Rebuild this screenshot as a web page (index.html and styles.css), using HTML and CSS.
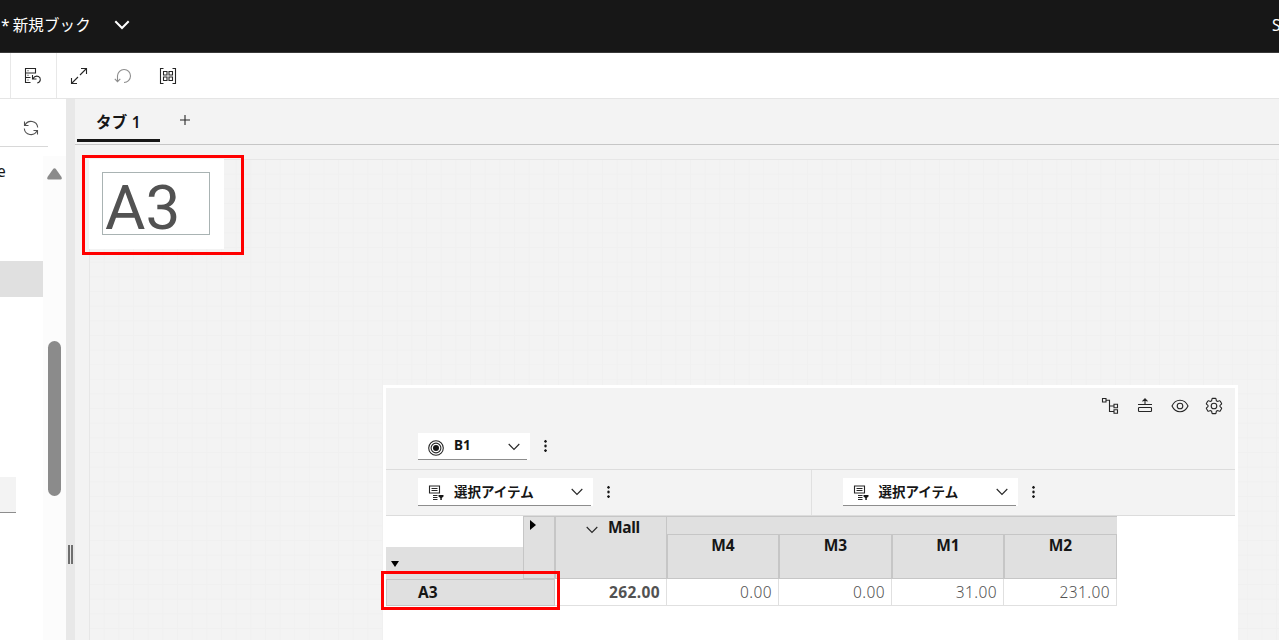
FILE: index.html
```
<!DOCTYPE html>
<html lang="ja">
<head>
  <meta charset="UTF-8">
  <title>新規ブック</title>
  <link rel="stylesheet" href="styles.css">
</head>
<body>

  <header class="header">
    <span class="book-name">* 新規ブック</span>
    <svg class="chevron" width="16" height="10" viewBox="0 0 16 10"><path d="M1.300 1.300 8 8l6.700-6.700"/></svg>
    <span class="user">S</span>
  </header>

  <div class="toolbar">
    <div class="tool-group first">
      <svg width="18" height="18" viewBox="0 0 18 18"><path d="M6.500 15.500H1.500V1.500h10V6H1.500M1.500 10.500h5M3.500 3.700h1M3.500 8.300h1M3.500 13h1M8.500 8v4h4M8.800 11.700c1.700-2.500 4-3 5.700-2.200 2.600 1.200 2.600 5.500-1.200 6.500"/></svg>
    </div>
    <div class="tool-group">
      <svg width="18" height="18" viewBox="0 0 18 18"><path d="M11 1.500h5.500V7M16.500 1.500l-6.500 6.500M7 16.500H1.500V11M1.500 16.500l6.500-6.500"/></svg>
      <svg class="disabled" width="18" height="18" viewBox="0 0 18 18"><path d="M3.500 14.500V8.800a6.500 6.500 0 1 1 6.500 6.700M.8 11.900l2.700 2.800 2.800-2.800"/></svg>
      <svg class="tiles" width="18" height="18" viewBox="0 0 18 18"><path d="M4.500 1.500h-3v15h3M13.500 1.500h3v15h-3M4.500 4.500h3.500v3.500H4.500zM10 4.500h3.500v3.500H10zM4.500 10h3.500v3.500H4.500zM10 10h3.500v3.500H10z"/></svg>
    </div>
  </div>

  <div class="workspace">
    <aside class="side">
      <div class="side-head">
        <svg width="16" height="16" viewBox="0 0 16 16"><path d="M1.500 1.500V5.500H5.500M2 5.200A6.700 6.700 0 0 1 14.700 7.500M14.500 14.500v-4h-4M14 10.800A6.700 6.700 0 0 1 1.300 8.500"/></svg>
      </div>
      <div class="side-body">
        <div class="tree">
          <div class="tree-text">e</div>
          <div class="tree-selected"></div>
          <div class="tree-input"></div>
        </div>
        <div class="scrollbar">
          <svg width="15" height="12" viewBox="0 0 15 12"><path d="M6.300.7Q7.500-.3 8.700.7L14.500 9Q15.300 11.500 13.500 11.500H1.500Q-.3 11.500.5 9z"/></svg>
          <div class="thumb"></div>
        </div>
      </div>
    </aside>
    <div class="splitter"><span class="grip"></span></div>

    <main class="main">
      <nav class="tabs">
        <span class="tab">タブ 1</span>
        <svg width="10" height="10" viewBox="0 0 10 10"><path d="M5 0v10M0 5h10"/></svg>
      </nav>

      <div class="canvas">
        <section class="widget text-widget">
          <div class="text-value">A3</div>
        </section>

        <section class="widget view-widget">
          <div class="view-tools">
            <svg width="18" height="18" viewBox="0 0 18 18"><path d="M1.500 1.500h3.500v3.500H1.500zM5 3.300h3.500v11.200H13M8.500 9H13M13 7.200h3.500v3.500H13zM13 12.700h3.500v3.500H13z"/></svg>
            <svg width="16" height="16" viewBox="0 0 16 16"><path d="M1 7.500h14M8 7V2M5.500 4.300 8 1.800l2.500 2.500"/><rect x="1.500" y="10.500" width="13" height="4" rx=".7"/></svg>
            <svg class="eye" width="18" height="18" viewBox="0 0 18 18"><path d="M1 9C2.700 5.300 5.600 3.300 9 3.300S15.300 5.300 17 9c-1.700 3.700-4.600 5.700-8 5.700S2.700 12.700 1 9z"/><circle cx="9" cy="9" r="2.800"/></svg>
            <svg class="gear" width="18" height="18" viewBox="0 0 18 18"><path d="M7.600 1.400h2.800q.5 0 .6.500l.4 1.900 1.200.7 1.900-.7q.5-.1.700.3l1.400 2.300q.2.500-.2.800L15 8.400v1.200l1.400 1.200q.4.300.2.800l-1.400 2.300q-.2.400-.7.300l-1.900-.7-1.200.7-.4 1.900q-.1.500-.6.500H7.600q-.5 0-.6-.5l-.4-1.900-1.200-.7-1.900.7q-.5.100-.7-.3l-1.400-2.300q-.2-.5.200-.8L3 9.600V8.400L1.600 7.200q-.4-.3-.2-.8l1.400-2.300q.2-.4.700-.3l1.900.7 1.200-.7.400-1.900q.1-.5.600-.5z"/><circle cx="9" cy="9" r="2.800"/></svg>
          </div>
          <div class="context-row">
            <div class="picker short">
              <svg class="target" width="16" height="16" viewBox="0 0 16 16"><circle cx="8" cy="8" r="7.300"/><circle cx="8" cy="8" r="4.900"/><circle class="dot" cx="8" cy="8" r="3"/></svg>
              <b>B1</b>
              <svg class="arrow" width="12" height="8" viewBox="0 0 12 8"><path d="M.7 1 6 6.500 11.300 1"/></svg>
            </div>
            <span class="more"></span>
          </div>
          <div class="axes">
            <div class="axis">
              <div class="picker">
                <svg width="16" height="16" viewBox="0 0 16 16"><path d="M1.500 1h10v7h-10zM3.500 3.500h6M3.500 5.500h6M5 10.500h4.500M5 12.500h4.500M5 14.500h4.500"/><path class="solid" d="M10.500 10h5v1.500l-1.700 1.500v2h-1.500v-2l-1.800-1.500z"/></svg>
                <b>選択アイテム</b>
                <svg class="arrow" width="12" height="8" viewBox="0 0 12 8"><path d="M.7 1 6 6.500 11.300 1"/></svg>
              </div>
              <span class="more"></span>
            </div>
            <div class="axis">
              <div class="picker">
                <svg width="16" height="16" viewBox="0 0 16 16"><path d="M1.500 1h10v7h-10zM3.500 3.500h6M3.500 5.500h6M5 10.500h4.500M5 12.500h4.500M5 14.500h4.500"/><path class="solid" d="M10.500 10h5v1.500l-1.700 1.500v2h-1.500v-2l-1.800-1.500z"/></svg>
                <b>選択アイテム</b>
                <svg class="arrow" width="12" height="8" viewBox="0 0 12 8"><path d="M.7 1 6 6.500 11.300 1"/></svg>
              </div>
              <span class="more"></span>
            </div>
          </div>

          <div class="crosstab">
            <div class="corner"><div class="row-toggle"><span class="tri-down"></span></div></div>
            <div class="col-toggle"><span class="tri-right"></span></div>
            <div class="head total">
              <svg class="arrow" width="12" height="8" viewBox="0 0 12 8"><path d="M.7 1 6 6.500 11.300 1"/></svg>
              Mall
            </div>
            <div class="head group"></div>
            <div class="head member">M4</div>
            <div class="head member">M3</div>
            <div class="head member">M1</div>
            <div class="head member">M2</div>
            <div class="row-head">A3</div>
            <div class="cell bold">262.00</div>
            <div class="cell">0.00</div>
            <div class="cell">0.00</div>
            <div class="cell">31.00</div>
            <div class="cell">231.00</div>
          </div>
        </section>

        <div class="mark mark-text"></div>
        <div class="mark mark-row"></div>
      </div>
    </main>
  </div>

</body>
</html>
```
FILE: styles.css
```
:root {
  --ink: #161616;
  --gray-10: #f3f3f3;
  --gray-20: #e0e0e0;
  --gray-30: #c6c6c6;
}

* {
  box-sizing: border-box;
}

body {
  margin: 0;
  height: 640px;
  display: flex;
  flex-direction: column;
  overflow: hidden;
  background: white;
  color: var(--ink);
  font-family: "Noto Sans", "Noto Sans CJK JP", sans-serif;
  font-size: 15.5px;
}

svg {
  display: block;
  flex: none;
  fill: none;
  stroke: #262626;
  stroke-width: 1.1;
}

/* header */
.header {
  flex: none;
  height: 53px;
  display: flex;
  align-items: center;
  padding: 0 0 3px 1px;
  background: #171717;
  border-bottom: 1px solid #393939;
  color: white;
  overflow: hidden;
}

.book-name {
  width: 113px;
  white-space: nowrap;
  word-spacing: -1px;
  letter-spacing: .1px;
}

.chevron {
  stroke: white;
  stroke-width: 2;
}

.user {
  margin-left: auto;
  width: 7px;
}

.toolbar {
  flex: none;
  height: 46px;
  display: flex;
  border-bottom: 1px solid #e5e5e5;
}

.tool-group {
  display: flex;
  align-items: center;
  gap: 26px;
  padding-left: 13px;
}

.tool-group.first {
  width: 47px;
  margin-left: 10px;
  border: solid #e8e8e8;
  border-width: 0 1px;
}

.disabled {
  stroke: #8d8d8d;
}

.tiles {
  margin-left: 1px;
}

/* side panel */
.workspace {
  flex: 1;
  display: flex;
  min-height: 0;
}

.side {
  width: 66px;
  display: flex;
  flex-direction: column;
}

.side-head {
  width: 48px;
  height: 48px;
  padding: 21px 0 0 23px;
  border-bottom: 1px solid #d8d8d8;
}

.side-head svg {
  stroke: #525252;
}

.side-body {
  flex: 1;
  display: flex;
  padding-top: 9px;
}

.tree {
  width: 43px;
}

.tree-text {
  height: 105px;
  margin-left: -3px;
  line-height: 31px;
}

.tree-selected {
  height: 36px;
  background: var(--gray-20);
}

.tree-input {
  width: 16px;
  height: 36px;
  margin-top: 180px;
  background: var(--gray-10);
  border-bottom: 1px solid #8d8d8d;
}

.scrollbar {
  width: 23px;
  padding: 12px 0 0 4px;
  background: #fcfcfc;
}

.scrollbar svg {
  fill: #8b8b8b;
  stroke: none;
}

.thumb {
  width: 13px;
  height: 155px;
  margin: 161px 0 0 1px;
  border-radius: 7px;
  background: #8b8b8b;
}

.splitter {
  width: 9px;
  padding: 446px 0 0 2px;
  background: #e8e8e8;
}

.grip {
  display: block;
  width: 5px;
  height: 19px;
  border: solid #6f6f6f;
  border-width: 0 2px;
}

/* tabs */
.main {
  flex: 1;
  display: flex;
  flex-direction: column;
  min-width: 0;
  background: var(--gray-10);
}

.tabs {
  height: 46px;
  display: flex;
  align-items: flex-start;
  padding-left: 2px;
  border-bottom: 1px solid var(--gray-30);
}

.tab {
  width: 83px;
  height: 43px;
  border-bottom: 3px solid var(--ink);
  font-weight: 600;
  line-height: 47px;
  text-align: center;
  letter-spacing: .3px;
}

.tabs svg {
  margin: 16px 0 0 20px;
}

.canvas {
  flex: 1;
  position: relative;
  margin: 14px 0 0 14px;
  border: solid #e7e7e7;
  border-width: 1px 0 0 1px;
  background:
    linear-gradient(to right, #f0f0f0 1px, transparent 1px) -1px -1px / 14.667px 14.667px,
    linear-gradient(#f0f0f0 1px, transparent 1px) -1px -1px / 14.667px 14.667px;
}

/* widgets sit freely on the canvas */
.widget {
  position: absolute;
  background: white;
}

.text-widget {
  left: -1px;
  top: -1px;
  width: 135px;
  height: 90px;
  padding: 13px;
}

.text-value {
  width: 108px;
  height: 63px;
  padding-left: 2px;
  border: 1px solid #a9b3b3;
  color: #525252;
  font-family: Roboto, sans-serif;
  font-size: 62px;
  line-height: 69px;
}

.view-widget {
  left: 293px;
  top: 225px;
  bottom: 0;
  width: 855px;
  border: solid white;
  border-width: 3px 3px 0;
}

.view-tools {
  height: 45px;
  display: flex;
  justify-content: flex-end;
  gap: 17px;
  padding: 9px 12px 0 0;
  background: var(--gray-10);
}

.view-tools svg:nth-child(2) {
  margin-left: 1px;
}

.view-tools .eye {
  margin: 0 -1px 0 1px;
}

.context-row {
  height: 37px;
  display: flex;
  padding-left: 32px;
  background: var(--gray-10);
  border-bottom: 1px solid #dcdcdc;
}

.picker {
  width: 175px;
  height: 28px;
  display: flex;
  align-items: center;
  padding: 0 10px;
  background: linear-gradient(#8d8d8d, #8d8d8d) 0 100% / 173px 1px no-repeat white;
  font-size: 13.5px;
}

.picker.short {
  width: 112px;
  height: 27px;
  background-size: 109px 1px;
}

.picker b {
  margin: -3px 0 0 10px;
  font-weight: 700;
}

.picker svg {
  margin-top: 2px;
}

.picker .arrow {
  margin: 0 0 0 auto;
}

.dot,
.solid {
  fill: var(--ink);
  stroke: none;
}

.more {
  width: 3px;
  height: 14px;
  margin: 7px 0 0 14px;
  background: radial-gradient(circle, #161616 1px, transparent 1.500px) 0 0 / 3px 4.667px;
}

.axes {
  height: 46px;
  display: flex;
  background: var(--gray-10);
  border-bottom: 1px solid #dcdcdc;
}

.axis {
  width: 425px;
  display: flex;
  padding: 8px 0 0 32px;
}

.axis + .axis {
  padding-left: 31px;
  border-left: 1px solid var(--gray-20);
}

.context-row .more {
  margin-top: 6px;
}

/* crosstab */
.crosstab {
  display: grid;
  width: 731px;
  grid-template-columns: 137px 32px 112px 112px 113px 112px 113px;
  grid-template-rows: 18px 45px 27px;
}

.corner {
  grid-row: span 2;
  padding-top: 31px;
}

.row-toggle {
  height: 32px;
  padding: 14px 0 0 5px;
  background: var(--gray-20);
}

.tri-down {
  display: block;
  width: 0;
  border: solid transparent;
  border-width: 6px 4.500px 0;
  border-top-color: black;
}

.tri-right {
  display: block;
  width: 0;
  border: solid transparent;
  border-width: 5px 0 5px 6px;
  border-left-color: black;
}

.col-toggle,
.head {
  background: var(--gray-20);
  border: solid var(--gray-30);
  border-width: 1px 0 1px 1px;
  font-weight: 700;
  text-align: center;
}

.col-toggle {
  grid-row: span 2;
  padding: 3px 0 0 6px;
  border-right-width: 1px;
}

.total {
  grid-row: span 2;
  display: flex;
  gap: 10px;
  padding-left: 30px;
  border-right-width: 1px;
  line-height: 20px;
  letter-spacing: -.3px;
}

.total .arrow {
  margin-top: 9px;
}

.group {
  grid-column: span 4;
  border-width: 1px 0 0;
}

.member {
  line-height: 20px;
  border-left-width: 1px;
  border-right-width: 1px;
}

.member:nth-child(5) {
  border-left-width: 1px;
}

.row-head {
  grid-column: span 2;
  padding-left: 31px;
  border: 1px solid var(--gray-30);
  background: var(--gray-20);
  font-weight: 700;
  line-height: 25px;
}

.cell {
  padding-right: 6px;
  border: solid var(--gray-20);
  border-width: 0 1px 1px 0;
  color: #525252;
  font-weight: 300;
  line-height: 26px;
  text-align: right;
  letter-spacing: .4px;
}

.cell.bold {
  font-weight: 700;
}

/* highlight frames */
.mark {
  position: absolute;
  border: 3px solid red;
}

.mark-text {
  left: -8px;
  top: -5px;
  width: 162px;
  height: 100px;
}

.mark-row {
  left: 291px;
  top: 411px;
  width: 179px;
  height: 39px;
}
```
